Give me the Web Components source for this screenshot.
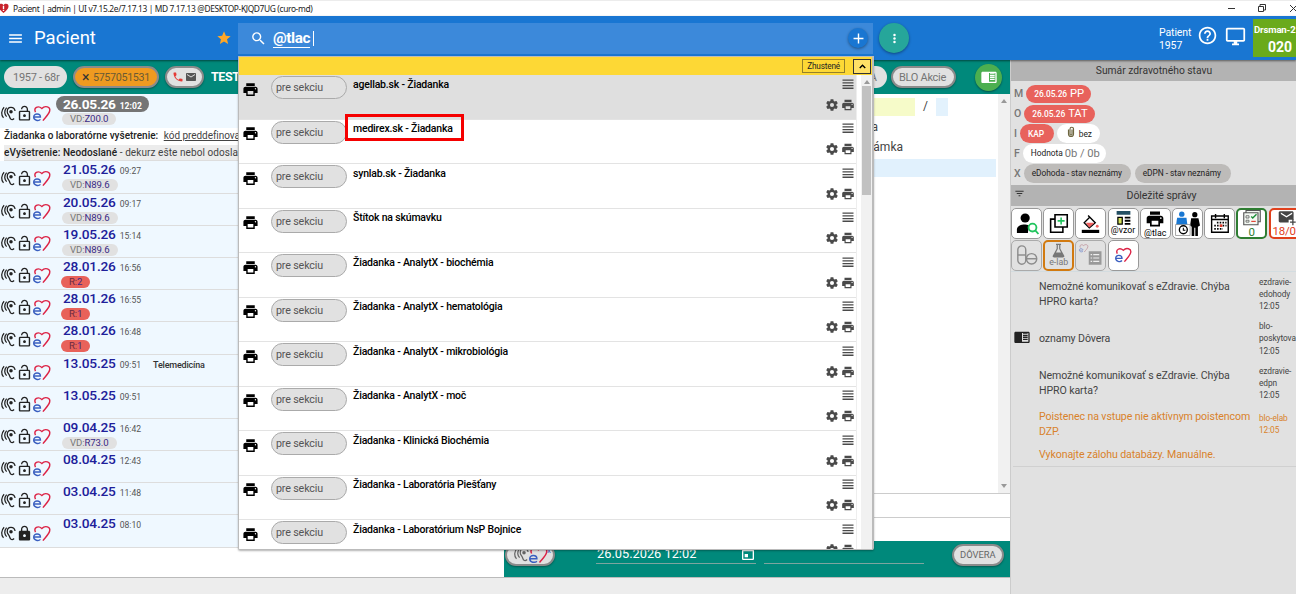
<!DOCTYPE html>
<html lang="sk">
<head>
<meta charset="utf-8">
<title>Pacient</title>
<style>
  body {
    margin: 0;
    width: 1296px;
    height: 594px;
    overflow: hidden;
    font-family: Roboto, "Liberation Sans", sans-serif;
    font-size: 11px;
    color: #222;
  }
</style>
</head>
<body>
<curo-app></curo-app>

<script>
const ICONS = {
  menu: '<path d="M3 18h18v-2H3v2zm0-5h18v-2H3v2zm0-7v2h18V6H3z"/>',
  lines: '<path d="M1 3h22v2.600H1zM1 8.400h22V11H1zM1 13.800h22v2.600H1zM1 19.200h22v2.600H1z"/>',
  star: '<path d="M12 17.270 18.180 21l-1.640-7.030L22 9.240l-7.190-.61L12 2 9.190 8.630 2 9.240l5.460 4.730L5.820 21z"/>',
  search: '<path d="M15.500 14h-.79l-.28-.27A6.471 6.471 0 0 0 16 9.500 6.500 6.500 0 1 0 9.500 16c1.610 0 3.090-.59 4.230-1.570l.27.28v.79l5 4.990L20.490 19l-4.990-5zm-6 0C7.010 14 5 11.990 5 9.500S7.010 5 9.500 5 14 7.010 14 9.500 11.990 14 9.500 14z"/>',
  add: '<path d="M19 13h-6v6h-2v-6H5v-2h6V5h2v6h6v2z"/>',
  more: '<circle cx="12" cy="5.500" r="2.300"/><circle cx="12" cy="12" r="2.300"/><circle cx="12" cy="18.500" r="2.300"/>',
  help: '<path d="M11 18h2v-2h-2v2zm1-16C6.480 2 2 6.480 2 12s4.480 10 10 10 10-4.480 10-10S17.520 2 12 2zm0 18c-4.410 0-8-3.590-8-8s3.590-8 8-8 8 3.590 8 8-3.590 8-8 8zm0-14c-2.210 0-4 1.790-4 4h2c0-1.100.9-2 2-2s2 .9 2 2c0 2-3 1.750-3 5h2c0-2.250 3-2.500 3-5 0-2.210-1.790-4-4-4z"/>',
  monitor: '<path d="M21 2H3c-1.100 0-2 .9-2 2v12c0 1.100.9 2 2 2h7v2H8v2h8v-2h-2v-2h7c1.100 0 2-.9 2-2V4c0-1.100-.9-2-2-2zm0 14H3V4h18v12z"/>',
  print: '<path d="M19 8H5c-1.660 0-3 1.340-3 3v6h4v4h12v-4h4v-6c0-1.660-1.340-3-3-3zm-3 11H8v-5h8v5zm3-7c-.55 0-1-.45-1-1s.45-1 1-1 1 .45 1 1-.45 1-1 1zm-1-9H6v4h12V3z"/>',
  gear: '<path d="M19.430 12.980c.04-.32.07-.64.07-.98s-.03-.66-.07-.98l2.110-1.650c.19-.15.24-.42.12-.64l-2-3.460c-.12-.22-.39-.3-.61-.22l-2.490 1c-.52-.4-1.080-.73-1.690-.98l-.38-2.650A.488.488 0 0 0 14 2h-4c-.25 0-.46.18-.49.42l-.38 2.650c-.61.25-1.170.59-1.690.98l-2.490-1c-.23-.09-.49 0-.61.22l-2 3.460c-.13.22-.07.49.12.64l2.110 1.650c-.04.32-.07.65-.07.98s.03.66.07.98l-2.110 1.650c-.19.15-.24.42-.12.64l2 3.460c.12.22.39.3.61.22l2.490-1c.52.4 1.080.73 1.690.98l.38 2.650c.03.24.24.42.49.42h4c.25 0 .46-.18.49-.42l.38-2.650c.61-.25 1.170-.59 1.690-.98l2.490 1c.23.09.49 0 .61-.22l2-3.460c.12-.22.07-.49-.12-.64l-2.110-1.650zM12 15.500A3.500 3.500 0 1 1 12 8.500a3.500 3.500 0 0 1 0 7z"/>',
  unlocked: '<path d="M12 17c1.100 0 2-.9 2-2s-.9-2-2-2-2 .9-2 2 .9 2 2 2zm6-9h-1V6c0-2.760-2.240-5-5-5S7 3.240 7 6h1.900c0-1.710 1.390-3.100 3.100-3.100s3.100 1.390 3.100 3.100v2H6c-1.100 0-2 .9-2 2v10c0 1.100.9 2 2 2h12c1.100 0 2-.9 2-2V10c0-1.100-.9-2-2-2zm0 12H6V10h12v10z"/>',
  locked: '<path d="M18 8h-1V6c0-2.760-2.240-5-5-5S7 3.240 7 6v2H6c-1.100 0-2 .9-2 2v10c0 1.100.9 2 2 2h12c1.100 0 2-.9 2-2V10c0-1.100-.9-2-2-2zm-6 9c-1.100 0-2-.9-2-2s.9-2 2-2 2 .9 2 2-.9 2-2 2zm3.100-9H8.900V6c0-1.710 1.390-3.100 3.100-3.100s3.100 1.390 3.100 3.100v2z"/>',
  ear: '<g fill="none" stroke="currentColor" stroke-width="2"><path d="M5 2C0 7 0 15 4 19"/><path d="M22.500 8C21 0 10 0 10 9c0 4 3 5 4 9 1 4 4 5 7 2"/><path d="M9 2.500C4 8 6 14 9 17"/></g><circle cx="16" cy="9" r="2.800"/>',
  call: '<path d="M6.620 10.790c1.440 2.830 3.760 5.140 6.590 6.590l2.200-2.200c.27-.27.67-.36 1.020-.24 1.120.37 2.330.57 3.570.57.55 0 1 .45 1 1V20c0 .55-.45 1-1 1C10.610 21 3 13.390 3 4c0-.55.45-1 1-1h3.500c.55 0 1 .45 1 1 0 1.250.2 2.450.57 3.570.11.35.03.74-.25 1.020l-2.200 2.200z"/>',
  mail: '<path d="M20 4H4c-1.100 0-2 .9-2 2v12c0 1.100.9 2 2 2h16c1.100 0 2-.9 2-2V6c0-1.100-.9-2-2-2zm0 4-8 5-8-5V6l8 5 8-5v2z"/>',
  filter: '<path d="M10 18h4v-2h-4v2zM3 6v2h18V6H3zm3 7h12v-2H6v2z"/>',
  chevron: '<path d="M12 8l-6 6 1.800 1.800L12 11.600l4.200 4.200L18 14z"/>',
  reader: '<path d="M21.500 4h-19C1.400 4 .5 4.900.5 6v13c0 1.100.9 2 2 2h19c1.100 0 2-.9 2-2V6c0-1.100-.9-2-2-2zm0 15H12V6h9.500v13zM20.500 9h-7v1.700h7V9zm0-2.500h-7v1.300h7V6.500zm0 5.300h-7v1.700h7v-1.700zm0 2.900h-7v1.700h7v-1.700z"/>',
  ehealth: '<path d="M3.500 10C.5 4 7 0 12.500 5c4.500-5 12.500-2.500 11 3.500-1 4.500-5.500 8.500-9.500 13.500" fill="none" stroke="#dc2346" stroke-width="2"/><path d="M10.500 20.300c-2.500 2.700-9.500 1.700-9.500-3.300 0-6 9.500-5.500 9.500 0H1.500" fill="none" stroke="#3b5fc0" stroke-width="2"/>',
  heart: '<path fill="#c8232c" d="M12 22C5 16 1 12 1 7c0-6 8-7 11-2 3-5 11-4 11 2 0 5-4 9-11 15z"/><path fill="#fff" d="M10.500 6h3v7h-3zm0 8.500h3v3h-3z"/>',
  event: '<path d="M7 12h5v5H7v-5zM16 1v2H8V1H6v2H5c-1.110 0-2 .9-2 2v14c0 1.100.89 2 2 2h14c1.100 0 2-.9 2-2V5c0-1.100-.9-2-2-2h-1V1h-2zm3 18H5V8h14v11z"/>',
  clip: '<path d="M7 7v9a5 5 0 0 0 10 0V6a3.500 3.500 0 0 0-7 0v10a2 2 0 0 0 4 0V7" fill="none" stroke="#6d6640" stroke-width="2.300"/>',
  person: '<circle cx="10" cy="6.500" r="5"/><path d="M1 23v-4c0-3 3-5 7-5.500 3 0 5 .3 6 1L13 23z"/><g fill="none" stroke="#22c45e" stroke-width="2"><circle cx="18" cy="17" r="4.300"/><path d="m21 20 3.500 4"/></g>',
  copy: '<path d="M8 2h14v14H8zM8 7H3v15h14v-6" fill="none" stroke="currentColor" stroke-width="1.800"/><path d="M15 5v8m-4-4h8" stroke="#22c45e" stroke-width="1.800"/>',
  fill: '<path d="m9 2 9 9-7.500 6.500L4 11l7-7z" fill="none" stroke="currentColor" stroke-width="1.700"/><path d="M6 11h11l-6.500 6z" fill="#f06060"/><circle cx="20.500" cy="15.500" r="1.800" fill="#f06060"/><path d="M1 20h22v4H1z"/>',
  template: '<path fill="#234f63" d="M1 0h22v6H1z"/><path d="M3 10h7v11H3z" fill="#d7e45c" stroke="currentColor" stroke-width="2"/><path d="M14 9h9v3h-9zm0 5h9v3h-9zm0 5h9v3h-9z"/>',
  people: '<g fill="#1877d2"><circle cx="6.500" cy="3" r="2.600"/><path d="M2 6.500h9L12 14H1z"/></g><circle cx="19" cy="3.500" r="2.500"/><path d="M15.500 7h7l1.500 7-2 1v9h-2.500v-8h-1v8H16v-9l-1.500-1z"/><path fill="#fff" stroke="#888" stroke-width=".7" d="M.5 13h14v10.500H.5z"/><circle cx="8" cy="18" r="3.800" fill="none" stroke="currentColor" stroke-width="1.300"/><path d="M8 16v2.500h2" fill="none" stroke="currentColor"/>',
  calendar: '<path d="M3 3.500h19V22H3zM3 7.500h19M7.500 1v5M17.500 1v5" fill="none" stroke="currentColor" stroke-width="1.600"/><path d="M9 11h11M6 14.500h14M6 18h10" stroke="currentColor" stroke-width="2" stroke-dasharray="1.800 1.400"/><path fill="#e03c2c" d="M12.300 13h3v3h-3z"/>',
  checklist: '<path d="M1 5h19v16H1zM4 5V2h19v15h-3" fill="#f3f8f2" stroke="#555" stroke-width="1.500"/><path d="M4 9h4v3H4zm0 6h4v2.500H4z" stroke="#555" fill="none"/><path d="m11 10 2 2 5-5" stroke="#1a8e36" fill="none" stroke-width="1.800"/><path d="M11 16.500h6" stroke="#e03c2c" stroke-width="1.500"/>',
  mailadd: '<path d="M20 3H3c-1 0-2 .9-2 2v12c0 1 .9 2 2 2h12v-4h7V5c0-1-.9-2-2-2zm0 4-8 5-8-5V5l8 5 8-5z"/><path d="M21 14v9m-4-4.500h8" stroke="currentColor" stroke-width="1.800"/>',
  pills: '<g fill="none" stroke="currentColor" stroke-width="1.700"><rect x="1" y="1" width="9.500" height="22" rx="4.750"/><path d="M1 12h9"/><circle cx="17.500" cy="16.500" r="6.200"/><path d="M11 16.500h13"/></g>',
  flask: '<path d="M8 1h8v2h-1v6l6 11c1 2 0 3-2 3H5c-2 0-3-1-2-3L9 9V3H8zM8 15h8l-3-6V3h-2v6z"/>',
  report: '<path fill="#999" d="M9 7h17v18H9z"/><path d="M15 11.500h8m-8 4.500h8m-8 4.500h8M11.500 11.500h2m-2 4.500h2m-2 4.500h2" stroke="#eee" stroke-width="1.500"/><g transform="translate(-4 -3) scale(.5)" opacity=".6" fill="none" stroke-width="2"><path d="M3.500 10C.5 4 7 0 12.500 5c4.500-5 12.500-2.500 11 3.500-1 4.500-5.500 8.500-9.500 13.500" stroke="#a5596a"/><path d="M10.500 20.300c-2.500 2.700-9.500 1.700-9.500-3.300 0-6 9.500-5.500 9.500 0H1.500" stroke="#3b5fc0"/></g>'
}

const icon = (name, size, extra = '') =>
  `<curo-icon name="${name}" style="--size:${size}px;${extra}"></curo-icon>`

function define (name, css, render) {
  window.customElements.define(name, class extends HTMLElement {
    constructor () {
      super()
      this.attachShadow({ mode: 'open' })
    }

    connectedCallback () {
      const tmpl = document.createElement('template')
      tmpl.innerHTML = `<style>*{box-sizing:border-box}${css}</style>${render(this)}`
      this.shadowRoot.replaceChildren(tmpl.content.cloneNode(true))
    }
  })
}

define('curo-icon', `
  :host { display: inline-block; flex: none; width: var(--size, 14px); height: var(--size, 14px); }
  svg { display: block; width: 100%; height: 100%; fill: currentColor; overflow: visible; }
`, el => `<svg viewBox="0 0 24 24">${ICONS[el.getAttribute('name')]}</svg>`)

// Rounded chip; colours and metrics come in through custom properties
define('curo-chip', `
  :host {
    display: inline-flex; align-items: center; flex: none; white-space: nowrap;
    height: var(--h, 18px); padding: 0 var(--px, 8px); border-radius: 12px;
    background: var(--bg, #e1e1e1); color: var(--fg, #555);
  }
  :host([raised]) {
    border: 2px solid #8b8b8b; box-shadow: 0 1px 2px rgba(0,0,0,.35);
  }
`, () => '<slot></slot>')

define('title-bar', `
  :host {
    display: flex; align-items: center; height: 16px; background: #fff; color: #222; flex: none;
    border-top: 1px solid #ececec; font-family: "Noto Sans", sans-serif; font-size: 8.400px;
  }
  .text { margin-left: 4px; letter-spacing: -.36px; white-space: nowrap; }
  svg { margin-left: auto; fill: none; stroke: #333; stroke-width: 1; }
`, () => `
  ${icon('heart', 11, 'margin-left:-2px')}
  <span class="text">Pacient | admin | UI v7.15.2e/7.17.13 | MD 7.17.13 @DESKTOP-KJQD7UG (curo-md)</span>
  <svg width="70" height="14" viewBox="0 0 70 14"><path d="M2 6.500h7M32.500 4.500h5v5h-5zM34 4.500v-2h5.500V8H37M64 3l7 7M71 3l-7 7"/></svg>
`)

define('app-bar', `
  :host {
    display: flex; align-items: center; height: 44px; flex: none; background: #1976d2; color: #fff;
    box-shadow: 0 1px 2px rgba(0,0,0,.5); position: relative; z-index: 1;
  }
  .left { display: flex; align-items: center; width: 238px; padding: 0 6px 0 7px; }
  .name { font-size: 18.500px; margin: -1px 0 0 10px; }
  .search { display: flex; align-items: center; width: 635px; height: 31px; background: #3c89da; padding: 0 5px 0 12px; }
  .query { font-size: 15.300px; font-weight: 700; letter-spacing: -.4px; margin: 2px 0 0 6px; border-bottom: 1px solid #fff; line-height: 17px; }
  .caret { width: 1px; height: 15px; background: #fff; margin-left: 3px; }
  .round { display: flex; align-items: center; justify-content: center; border-radius: 50%; box-shadow: 0 1px 3px rgba(0,0,0,.4); }
  .add { width: 20px; height: 20px; margin-left: auto; background: #1976d2; }
  .more { width: 30px; height: 30px; margin-left: 6px; background: #26a69a; }
  .patient { margin-left: auto; width: 40px; line-height: 13.300px; font-size: 10.500px; letter-spacing: -.1px; margin-top: 2px; }
  .station { width: 43px; height: 38px; margin-left: 7px; background: #6aaa1c; overflow: hidden; white-space: nowrap; font-weight: 700; }
  .station div:first-child { font-size: 9.600px; line-height: 12px; padding: 5px 0 0 1px; letter-spacing: -.15px; }
  .station div:last-child { font-size: 14px; line-height: 19px; padding: 2px 0 0 15px; }
`, () => `
  <div class="left">${icon('menu', 17)}<span class="name">Pacient</span>${icon('star', 16, 'margin-left:auto;color:#ffa726')}</div>
  <div class="search">
    ${icon('search', 17)}<span class="query">@tlac</span><span class="caret"></span>
    <span class="round add">${icon('add', 17)}</span>
  </div>
  <span class="round more">${icon('more', 13)}</span>
  <div class="patient">Patient<br>1957</div>
  ${icon('help', 21, 'margin:0 0 5px -2px')}${icon('monitor', 21, 'margin:0 0 3px 7px')}
  <div class="station"><div>Drsman-2</div><div>020</div></div>
`)

define('patient-bar', `
  :host {
    display: flex; align-items: center; height: 34px; flex: none; padding: 0 8px 0 4px;
    background: #00897b; color: #fff; font-size: 11px;
  }
  curo-chip { --h: 22px; --px: 8px; --fg: #757575; margin-right: 6px; }
  .name { width: 27px; margin: -1px 1px 0 1px; overflow: hidden; font-size: 12.500px; font-weight: 700; letter-spacing: -.4px; }
  .view { display: flex; align-items: center; justify-content: center; width: 27px; height: 27px; margin-left: auto; border-radius: 50%; background: #4caf50; box-shadow: 0 1px 2px rgba(0,0,0,.4); }
`, () => `
  <curo-chip style="width:63px;--px:9px;letter-spacing:-.3px">1957 - 68r</curo-chip>
  <curo-chip raised style="width:86px;--px:7px;--bg:#ef9a20;--fg:#6b5a34;font-size:10.700px;letter-spacing:-.3px"><span style="font-size:14px;width:12px;color:#333">×</span>5757051531</curo-chip>
  <curo-chip raised style="width:39px;--px:5px">${icon('call', 12, 'color:#e53935')}${icon('mail', 12, 'color:#555;margin-left:1px')}</curo-chip>
  <span class="name">TEST</span>
  <curo-chip style="margin-left:620px;width:28px;justify-content:flex-end;--px:10px">A</curo-chip>
  <curo-chip raised style="margin-left:-2px;width:65px;--px:6px;letter-spacing:-.3px">BLO Akcie</curo-chip>
  <span class="view">${icon('reader', 16)}</span>
`)

define('visit-row', `
  :host { display: flex; height: 32.200px; flex: none; background: #eff8ff; border-bottom: 1px solid #ddd; }
  :host([current]) { height: 34.400px; border: 0; }
  .icons { display: flex; align-items: center; width: 61px; padding: 4px 0 0 1px; color: #222; }
  .top { display: flex; align-items: baseline; height: 17px; line-height: 17px; padding-left: 2px; color: #20209a; font-size: 13.700px; letter-spacing: -.2px; font-weight: 500; white-space: nowrap; }
  .top small { margin-left: 4px; font-size: 8.600px; letter-spacing: 0; font-weight: 400; color: #555; }
  .top b { margin-left: 12px; font-size: 9px; font-weight: 500; color: #333; }
  :host([current]) .top { height: 16px; line-height: 16px; margin: 2px 0 1px -5px; padding: 0 7px 0 7px; border-radius: 9px; background: #757575; color: #fff; font-weight: 700; letter-spacing: -.3px; }
  :host([current]) .top small { color: #fff; font-weight: 700; }
  .chip { display: block; width: fit-content; height: 12px; line-height: 12.500px; margin: 1px 0 0 1px; padding: 0 8px; border-radius: 6px; background: #e1e1e1; font-size: 9.600px; letter-spacing: -.1px; color: #777; }
  .chip span { color: #3a2a86; }
  .chip.risk { background: #e8625a; color: #6b2a40; margin-left: 0; }
`, el => {
  const code = el.getAttribute('code')
  const [kind, value] = code ? code.split(':') : []
  const note = el.getAttribute('note')
  return `
    <div class="icons">
      ${icon('ear', 15)}${icon(el.hasAttribute('locked') ? 'locked' : 'unlocked', 17)}${icon('ehealth', 17)}
    </div>
    <div>
      <div class="top">${el.getAttribute('date')}<small>${el.getAttribute('time')}</small>${note ? `<b>${note}</b>` : ''}</div>
      ${code ? `<div class="chip ${kind === 'R' ? 'risk' : ''}">${kind}:<span>${value}</span></div>` : ''}
    </div>`
})

const VISITS = [
  ['21.05.26', '09:27', 'VD:N89.6'],
  ['20.05.26', '09:17', 'VD:N89.6'],
  ['19.05.26', '15:14', 'VD:N89.6'],
  ['28.01.26', '16:56', 'R:2'],
  ['28.01.26', '16:55', 'R:1'],
  ['28.01.26', '16:48', 'R:1'],
  ['13.05.25', '09:51', '', 'note="Telemedicína"'],
  ['13.05.25', '09:51', ''],
  ['09.04.25', '16:42', 'VD:R73.0'],
  ['08.04.25', '12:43', ''],
  ['03.04.25', '11:48', ''],
  ['03.04.25', '08:10', '', 'locked']
]

define('visit-list', `
  :host { display: flex; flex-direction: column; width: 239px; height: 454px; flex: none; overflow: hidden; border-right: 1px solid #ddd; }
  p { margin: 0; flex: none; padding-left: 4px; white-space: nowrap; font-size: 10px; }
  .order { height: 17px; line-height: 15px; font-weight: 500; }
  .order u { margin-left: 3px; font-weight: 400; color: #444; letter-spacing: -.05px; }
  .state { height: 16px; line-height: 15px; background: #ececec; border-bottom: 1px solid #ddd; margin-left: 4px; padding: 0; color: #444; letter-spacing: .08px; }
  .state b { font-weight: 500; color: #222; }
`, () => `
  <visit-row current date="26.05.26" time="12:02" code="VD:Z00.0"></visit-row>
  <p class="order">Žiadanka o laboratórne vyšetrenie: <u>kód preddefinova</u></p>
  <p class="state"><b>eVyšetrenie: Neodoslané</b> - dekurz ešte nebol odosla</p>
  ${VISITS.map(([date, time, code, extra = '']) =>
    `<visit-row date="${date}" time="${time}" code="${code}" ${extra}></visit-row>`).join('')}
`)

define('record-editor', `
  :host { display: flex; flex-direction: column; flex: 1; background: #fff; }
  .scroll { display: flex; height: 399.500px; border-bottom: 1px solid #ccc; }
  .form { flex: 1; padding: 4px 2px 0 0; font-size: 12px; color: #444; }
  .fields { display: flex; height: 18px; line-height: 17px; padding-left: 600px; }
  .fields i { width: 76px; background: #f6fbc9; }
  .fields span { width: 21px; text-align: center; }
  .fields i:last-child { width: 12px; background: #e3f2fd; }
  .line { height: 20px; line-height: 22px; text-align: right; }
  .active { height: 18px; background: #e1f1fd; margin-top: 3px; }
  .track { display: flex; flex-direction: column; justify-content: space-between; align-items: center; width: 12px; padding: 5px 0; background: #f1f1f1; }
  .track i { border: 3px solid transparent; border-bottom: 4px solid #999; border-top: 0; }
  .track i:last-child { transform: rotate(180deg); }
  .field { height: 24px; border-bottom: 1px solid #ccc; }
`, () => `
  <div class="scroll">
    <div class="form">
      <div class="fields"><i></i><span>/</span><i></i></div>
      <div class="line" style="padding-right:118px">a</div>
      <div class="line" style="padding-right:93px">námka</div>
      <div class="active"></div>
    </div>
    <div class="track"><i></i><i></i></div>
  </div>
  <div class="field"></div>
`)

define('record-footer', `
  :host {
    display: flex; align-items: center; width: 506px; height: 36px; flex: none; margin-left: auto; padding: 0 6px 9px 1px;
    background: #00897b; color: #fff;
  }
  curo-chip { --h: 22px; --fg: #666; font-size: 9.400px; }
  .input { display: flex; align-items: flex-start; justify-content: space-between; width: 160px; height: 18px; line-height: 15px; border-bottom: 1px solid #7da59f; font-size: 12.800px; padding: 0 1px; }
`, () => `
  <curo-chip raised style="width:50px;--px:7px">${icon('ear', 15)}${icon('ehealth', 18)}<span style="color:#3b5fc0;font-size:8px;align-self:flex-start">x</span></curo-chip>
  <div class="input" style="margin-left:41px"><span>26.05.2026 12:02</span>${icon('event', 16, 'margin-right:-1px')}</div>
  <div class="input" style="margin-left:8px"></div>
  <curo-chip raised style="margin-left:auto;width:52px;--px:6px">DÔVERA</curo-chip>
`)

define('tool-tile', `
  :host {
    display: flex; flex-direction: column; align-items: center; justify-content: center; flex: none;
    width: 31px; height: 31px; border: 1px solid #999; border-radius: 5px; background: #fff; color: #000;
  }
  :host([disabled]) { background: #e1e1e1; color: #8c8c8c; border-color: #aaa; }
  :host([tone=green]) { border: 2px solid #2e7d32; color: #2e7d32; }
  :host([tone=red]) { border: 2px solid #e0401c; color: #e0401c; }
  :host([tone=orange]) { border: 2px solid #d27a10; color: #777; background: #e1e1e1; }
  span { font-size: 8.800px; line-height: 9px; white-space: nowrap; }
  :host([tone=green]) span, :host([tone=red]) span { font-size: 11.500px; line-height: 11px; }
  :host([tone=red]) { align-items: flex-end; }
  :host([tone=red]) span { width: 25px; letter-spacing: -.2px; }
`, el => {
  const label = el.getAttribute('label')
  const size = el.getAttribute('size') || 20
  return icon(el.getAttribute('icon'), size, el.getAttribute('tone') === 'red' ? 'color:#444;margin-right:3px' : '') + (label ? `<span>${label}</span>` : '')
})

define('side-message', `
  :host { display: flex; align-items: center; flex: none; padding-left: 3px; font-size: 10.600px; letter-spacing: -.1px; color: #444; }
  :host([warn]) { color: #d9822b; }
  .mark { width: 25px; flex: none; color: #222; }
  .text { width: 220px; flex: none; line-height: 15px; }
  .source { flex: none; line-height: 12.300px; font-size: 8.300px; letter-spacing: -.08px; white-space: nowrap; }
`, el => `
  <div class="mark">${el.hasAttribute('marked') ? icon('reader', 16) : ''}</div>
  <div class="text"><slot></slot></div>
  <div class="source"><slot name="source"></slot></div>
`)

define('health-panel', `
  :host { display: flex; flex-direction: column; width: 286px; flex: none; overflow: hidden; background: #e1e1e1; border-left: 1px solid #ccc; }
  header { display: flex; align-items: center; height: 21px; flex: none; padding-left: 1px; background: #b3b3b3; color: #333; font-size: 10.300px; }
  header span { flex: 1; text-align: center; }
  .summary { padding: 3px 0 0 3px; height: 103.500px; flex: none; }
  .row { display: flex; align-items: center; height: 19.850px; color: #777; font-size: 10.500px; }
  .row > b { font-weight: 500; margin-right: 3px; }
  curo-chip { --h: 18.500px; margin-right: 3px; font-size: 8.400px; letter-spacing: -.04px; }
  .red { --bg: #e8625c; --fg: #fff; font-weight: 500; }
  .red span, .big { font-size: 11.200px; margin-left: 3px; font-weight: 400; }
  .white { --bg: #fff; --fg: #222; }
  .gray { --bg: #bdbbb9; --fg: #222; margin-right: 4px; }
  .big { color: #777; margin-left: 2px; }
  .tools { display: grid; grid-template-columns: repeat(9, 31px); gap: 1px 1.200px; height: 66px; flex: none; padding-top: 2px; border-bottom: 1px solid #d3dce0; }
  .end { border-top: 1px solid #d0d0d0; margin: 0 0 0 2px; }
`, () => `
  <header><span>Sumár zdravotného stavu</span></header>
  <div class="summary">
    <div class="row"><b>M</b><curo-chip class="red" style="width:65px">26.05.26<span>PP</span></curo-chip></div>
    <div class="row"><b>O</b><curo-chip class="red" style="width:71px">26.05.26<span>TAT</span></curo-chip></div>
    <div class="row"><b>I</b><curo-chip class="red" style="width:34px">KAP</curo-chip><curo-chip class="white" style="width:43px">${icon('clip', 12, 'margin:0 0 4px 0')}<span style="margin-left:auto">bez</span></curo-chip></div>
    <div class="row"><b>F</b><curo-chip class="white" style="width:83px">Hodnota<span class="big">0b / 0b</span></curo-chip></div>
    <div class="row"><b>X</b><curo-chip class="gray" style="width:107px">eDohoda - stav neznámy</curo-chip><curo-chip class="gray" style="width:96px">eDPN - stav neznámy</curo-chip></div>
  </div>
  <header>${icon('filter', 11, 'margin:-4px -4px 0 2px')}<span style="padding-left:6px;font-size:10.600px;letter-spacing:-.1px">Dôležité správy</span></header>
  <div class="tools">
    <tool-tile icon="person" size="22"></tool-tile>
    <tool-tile icon="copy" size="21"></tool-tile>
    <tool-tile icon="fill" size="19"></tool-tile>
    <tool-tile icon="template" size="15" label="@vzor"></tool-tile>
    <tool-tile icon="print" size="20" label="@tlac"></tool-tile>
    <tool-tile icon="people" size="25"></tool-tile>
    <tool-tile icon="calendar" size="21"></tool-tile>
    <tool-tile icon="checklist" size="18" label="0" tone="green"></tool-tile>
    <tool-tile icon="mailadd" size="17" label="18/0" tone="red"></tool-tile>
    <tool-tile icon="pills" size="20" disabled></tool-tile>
    <tool-tile icon="flask" size="15" label="e-lab" tone="orange"></tool-tile>
    <tool-tile icon="report" size="18" disabled></tool-tile>
    <tool-tile icon="ehealth" size="16"></tool-tile>
  </div>
  <side-message style="height:45px">Nemožné komunikovať s eZdravie. Chýba HPRO karta?<span slot="source">ezdravie-<br>edohody<br>12:05</span></side-message>
  <side-message marked style="height:44px">oznamy Dôvera<span slot="source">blo-<br>poskytova<br>12:05</span></side-message>
  <side-message style="height:45px">Nemožné komunikovať s eZdravie. Chýba HPRO karta?<span slot="source">ezdravie-<br>edpn<br>12:05</span></side-message>
  <side-message warn style="height:37px">Poistenec na vstupe nie aktívnym poistencom DZP.<span slot="source">blo-elab<br>12:05</span></side-message>
  <side-message warn style="height:23px">Vykonajte zálohu databázy. Manuálne.</side-message>
  <div class="end"></div>
`)

define('search-result', `
  :host { display: flex; height: 44.500px; flex: none; border-bottom: 1px solid #e3e3e3; background: #fff; color: #000; }
  :host([active]) { background: #dfdfdf; }
  .pill { width: 76px; height: 23px; margin: 1px 0 0 12px; padding-left: 4px; line-height: 21px; border: 1px solid #aaa; border-radius: 12px; background: #e1e1e1; color: #555; font-size: 10.700px; letter-spacing: -.15px; }
  .title { margin: 2.500px 0 0 6px; line-height: 13px; font-size: 10.500px; letter-spacing: -.19px; font-weight: 500; white-space: nowrap; align-self: flex-start; }
  :host([marked]) .title { margin: -5.500px 0 0 -2px; padding: 5px 8px 3px 5px; border: 3px solid #f50000; line-height: 14px; height: 27px; }
  .actions { display: grid; grid-template-columns: 14px 14px; column-gap: 2px; align-content: start; row-gap: 8px; margin: 2.500px 1px 0 auto; color: #4a4a4a; justify-items: center; }
  .actions :first-child { grid-column: 2; }
`, () => `
  ${icon('print', 17, 'margin:5.500px 0 0 3px')}
  <div class="pill">pre sekciu</div>
  <div class="title"><slot></slot></div>
  <div class="actions">${icon('lines', 12)}${icon('gear', 14)}${icon('print', 14)}</div>
`)

const RESULTS = [
  'agellab.sk - Žiadanka',
  'medirex.sk - Žiadanka',
  'synlab.sk - Žiadanka',
  'Štítok na skúmavku',
  'Žiadanka - AnalytX - biochémia',
  'Žiadanka - AnalytX - hematológia',
  'Žiadanka - AnalytX - mikrobiológia',
  'Žiadanka - AnalytX - moč',
  'Žiadanka - Klinická Biochémia',
  'Žiadanka - Laboratória Piešťany',
  'Žiadanka - Laboratórium NsP Bojnice'
]

define('search-popup', `
  :host {
    display: flex; flex-direction: column; overflow: hidden; background: #fff;
    border: 1px solid #bbb; border-width: 1px 2px 1px 1px; border-radius: 0 0 2px 2px; box-shadow: 0 1px 2px rgba(0,0,0,.3);
  }
  .bar { display: flex; align-items: center; justify-content: flex-end; height: 18px; flex: none; background: #fdd835; padding-right: 1px; }
  .dense { height: 14px; padding: 0 4px; line-height: 12px; border: 1px solid #94802a; font-size: 8.200px; letter-spacing: -.15px; color: #222; }
  .close { display: flex; align-items: center; justify-content: center; width: 18px; height: 15px; margin-left: 8px; border: 1px solid #333; background: #ffe066; color: #000; }
  .body { display: flex; flex: 1; min-height: 0; }
  .list { display: flex; flex-direction: column; flex: 1; border-right: 1px solid #eee; }
  .track { display: flex; flex-direction: column; align-items: center; width: 11px; margin-left: 4px; background: #f1f1f1; }
  .track i { border: 3px solid transparent; border-bottom: 4px solid #999; border-top: 0; margin: 5px 0 2px; }
  .thumb { width: 9px; height: 109px; background: #c1c1c1; }
`, () => `
  <div class="bar"><span class="dense">Zhustené</span><span class="close">${icon('chevron', 13)}</span></div>
  <div class="body">
    <div class="list">
      ${RESULTS.map((title, i) =>
        `<search-result ${i === 0 ? 'active' : i === 1 ? 'marked' : ''}>${title}</search-result>`).join('')}
    </div>
    <div class="track"><i></i><div class="thumb"></div></div>
  </div>
`)

define('curo-app', `
  :host { display: flex; flex-direction: column; position: relative; width: 1296px; height: 594px; background: #ededed; }
  .page { display: flex; flex: 1; min-height: 0; }
  .record { display: flex; flex-direction: column; width: 1010px; }
  .panes { display: flex; height: 483.500px; background: #fff; border-bottom: 1px solid #bbb; }
  .main { display: flex; flex-direction: column; flex: 1; }
  record-editor { height: 447px; flex: none; }
  search-popup { position: absolute; left: 238px; top: 56px; width: 636px; height: 494px; z-index: 2; }
`, () => `
  <title-bar></title-bar>
  <app-bar></app-bar>
  <div class="page">
    <div class="record">
      <patient-bar></patient-bar>
      <div class="panes">
        <visit-list></visit-list>
        <div class="main"><record-editor></record-editor><record-footer></record-footer></div>
      </div>
    </div>
    <health-panel></health-panel>
  </div>
  <search-popup></search-popup>
`)
</script>
</body>
</html>
